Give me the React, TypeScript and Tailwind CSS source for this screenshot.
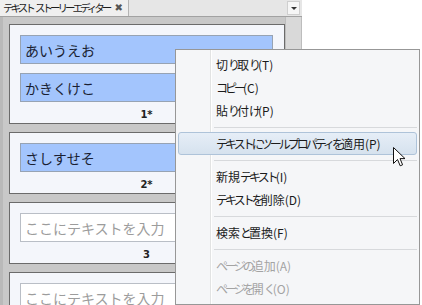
const jp = "font-['Noto_Sans_CJK_JP','Noto_Sans',sans-serif]";

type Item = { label: string; sep?: false; disabled?: boolean; hover?: boolean } | { sep: true };

const items: Item[] = [
  { label: "切り取り(T)" },
  { label: "コピー(C)" },
  { label: "貼り付け(P)" },
  { sep: true },
  { label: "テキストにツールプロパティを適用(P)", hover: true },
  { sep: true },
  { label: "新規テキスト(I)" },
  { label: "テキストを削除(D)" },
  { sep: true },
  { label: "検索と置換(F)" },
  { sep: true },
  { label: "ページの追加(A)", disabled: true },
  { label: "ページを開く(O)", disabled: true },
];

function Ui({ text, kana }: { text: string; kana: string }) {
  const parts = text.split(/([\u3040-\u30ff]+)/);
  return (
    <span>
      {parts.map((p, i) =>
        /^[\u3040-\u30ff]+$/.test(p) ? (
          <span key={i} className={kana}>
            {p}
          </span>
        ) : (
          <span key={i}>{p}</span>
        )
      )}
    </span>
  );
}

function Field({ text, filled }: { text: string; filled: boolean }) {
  return (
    <div
      className={`h-[29px] border flex items-center pl-[4px] text-[14px] leading-none whitespace-nowrap overflow-hidden ${
        filled ? "bg-[#a3c5fd] border-[#97a3b3] text-[#1a1f33]" : "bg-white border-[#b9bec6] text-[#9c9c9c]"
      }`}
    >
      {text}
    </div>
  );
}

function Card({ fields, label }: { fields: { text: string; filled: boolean }[]; label: string }) {
  return (
    <div className="border border-[#6b6b6b] bg-[#f4f6fb] pl-[10px] pr-[11px] pt-[10px] shrink-0">
      <div className="flex flex-col gap-[9px]">
        {fields.map((f, i) => (
          <Field key={i} text={f.text} filled={f.filled} />
        ))}
      </div>
      <div className="h-[21px] pt-[5px] flex items-center justify-center font-['DejaVu_Sans',sans-serif] font-bold text-[10px] text-[#222] leading-none">
        {label}
      </div>
    </div>
  );
}

export default function App() {
  return (
    <div className={`relative w-[422px] h-[305px] overflow-hidden bg-white ${jp}`}>
      <div className="flex flex-col w-[302px] h-full">
        {/* tab strip */}
        <div className="h-[17px] flex bg-[#e6e6e6] border-b border-[#a2a2a2] shrink-0">
          <div className="w-[129px] flex items-center pl-[3px] bg-[#efefef] border-r border-[#b4b4b4] text-[10.5px] text-[#1c1c1c] leading-none whitespace-nowrap">
            <Ui text="テキスト ストーリーエディター" kana="tracking-[-3px]" />
            <span className="ml-auto mr-[5px] font-['DejaVu_Sans',sans-serif] text-[10px] text-[#555]">✖</span>
          </div>
          <div className="flex-1" />
          <div className="w-[13px] my-[1px] mr-[2px] border border-[#cfcfcf] bg-[#f6f6f6] flex items-center justify-center">
            <div className="w-0 h-0 border-l-[3px] border-r-[3px] border-t-[3px] border-l-transparent border-r-transparent border-t-[#333]" />
          </div>
        </div>
        {/* body */}
        <div className="flex flex-1 min-h-0 bg-[#c8c8c8]">
          <div className="w-[285px] flex flex-col gap-[8px] pt-[7px] pl-[6px] border-l-[3px] border-[#b9b9b9] overflow-hidden">
            <Card
              fields={[
                { text: "あいうえお", filled: true },
                { text: "かきくけこ", filled: true },
              ]}
              label="1*"
            />
            <Card fields={[{ text: "さしすせそ", filled: true }]} label="2*" />
            <Card fields={[{ text: "ここにテキストを入力", filled: false }]} label="3" />
            <Card fields={[{ text: "ここにテキストを入力", filled: false }]} label="4" />
          </div>
          <div className="w-[17px] bg-[#d9d9d9] border-l border-r border-[#bdbdbd]" />
        </div>
      </div>

      {/* context menu */}
      <div className="absolute left-[175px] top-[49px] w-[245px] h-[256px] bg-[#f5f6f8] border border-[#979797] pt-[3px] pl-[2px] pr-[2px] text-[12px]">
        <div className="absolute left-[34px] top-0 bottom-0 w-px bg-[#e2e3e3]" />
        <div className="absolute left-[35px] top-0 bottom-0 w-px bg-white" />
        <div className="relative flex flex-col">
          {items.map((it, i) =>
            it.sep ? (
              <div key={i} className="h-[10px] flex items-center pl-[36px]">
                <div className="h-px w-full bg-[#d7d9dc]" />
              </div>
            ) : (
              <div
                key={i}
                className={`h-[23px] flex items-center pl-[37px] leading-none whitespace-nowrap rounded-[3px] border ${
                  it.hover
                    ? "bg-gradient-to-b from-[#e6eef7] to-[#d6e2ee] border-[#aec3d9]"
                    : "border-transparent"
                } ${it.disabled ? "text-[#a3a3a3]" : "text-[#1b1b1b]"}`}
              >
                <Ui text={it.label} kana="tracking-[-3px]" />
              </div>
            )
          )}
        </div>
      </div>

      {/* mouse cursor */}
      <svg className="absolute left-[393px] top-[147px]" width="13" height="20" viewBox="0 0 13 20">
        <path d="M0.5 0.5 L0.5 16.5 L4.5 12.5 L7.2 18.8 L9.6 17.8 L7 11.6 L12 11.6 Z" fill="#fff" stroke="#111" strokeWidth="1" strokeLinejoin="round" />
      </svg>
    </div>
  );
}
